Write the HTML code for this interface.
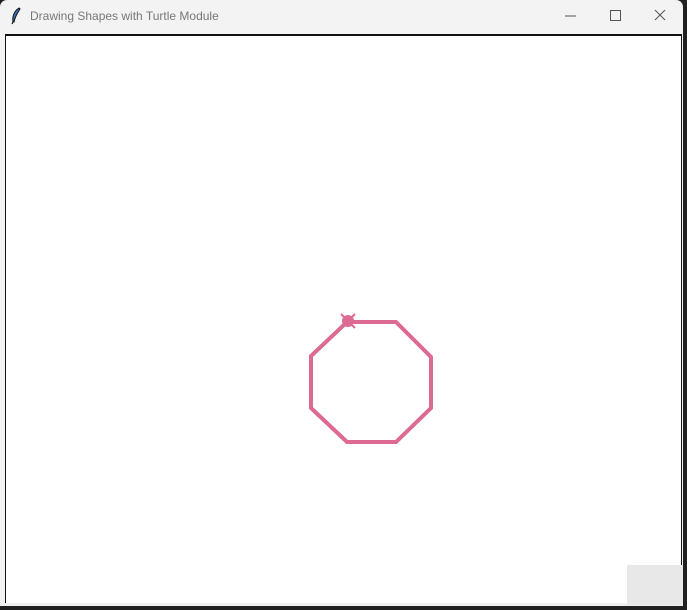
<!DOCTYPE html>
<html><head><meta charset="utf-8"><style>
html,body{margin:0;padding:0;width:687px;height:610px;overflow:hidden;background:#202020;font-family:"Liberation Sans",sans-serif}
#win{position:absolute;left:0;top:0;width:683px;height:606px;background:#f3f3f3;border-radius:7px 7px 0 0;overflow:hidden}
#title{position:absolute;left:30px;top:9px;font-size:12px;color:#777}
#canvas{position:absolute;left:5px;top:34px;width:675px;height:567px;background:#fff;border-top:2px solid #111;border-left:1px solid #111;border-right:1px solid #111}
#bottom{position:absolute;left:0;top:603px;width:683px;height:3px;background:#f0f0f0}
#gray{position:absolute;left:627px;top:565px;width:56px;height:40px;background:#e8e8e8}
</style></head><body>
<div id="win">
<svg style="position:absolute;left:10px;top:7px" width="12" height="18" viewBox="0 0 12 18"><path d="M9 1 C4 4 2 10 3 15 L4 15 C5 10 8 5 10 2Z" fill="#3a6fb0" stroke="#111" stroke-width="1"/><path d="M3 15 L2 17" stroke="#111" stroke-width="1.2"/></svg>
<div id="title">Drawing Shapes with Turtle Module</div>
<svg style="position:absolute;left:560px;top:8px" width="110" height="16"><line x1="5" y1="8" x2="16" y2="8" stroke="#555" stroke-width="1"/><rect x="50.5" y="2.5" width="10" height="10" fill="none" stroke="#555"/><path d="M95 2 L105 12 M105 2 L95 12" stroke="#555" stroke-width="1"/></svg>
<div id="canvas"></div>
<div id="bottom"></div>
<div id="gray"></div>
<svg style="position:absolute;left:0;top:0" width="683" height="606">
<polygon points="347,322 396,322 431,357 431,408 396,442 347,442 311,408 311,356" fill="none" stroke="#dc6a92" stroke-width="4" stroke-linejoin="miter"/>
<ellipse cx="348" cy="321" rx="6" ry="6" fill="#dc6a92"/>
<path d="M341 314 L344 317 M355 314 L352 317 M341 328 L344 325 M355 328 L352 325" stroke="#dc6a92" stroke-width="2"/>
</svg>
</div>
</body></html>
